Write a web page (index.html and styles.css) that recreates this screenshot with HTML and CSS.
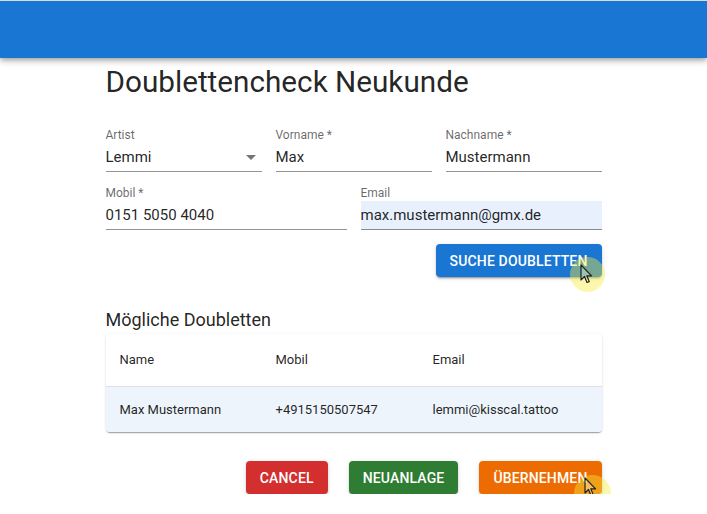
FILE: index.html
```html
<!DOCTYPE html>
<html lang="de">
<head>
  <meta charset="UTF-8" />
  <meta name="viewport" content="width=device-width, initial-scale=1.0"/>
  <title>Doublettencheck Neukunde</title>
  <link rel="stylesheet" href="styles.css">
</head>
<body>

  <header class="appbar"></header>

  <main class="container">
    <h1 class="title">Doublettencheck Neukunde</h1>

    <!-- Stammdaten -->
    <div class="form-row three">
      <div class="field">
        <label>Artist</label>
        <div class="input select">
          <span>Lemmi</span>
          <svg class="drop" viewBox="0 0 24 24" width="24" height="24"><path d="M7 10l5 5 5-5z"/></svg>
        </div>
      </div>
      <div class="field">
        <label>Vorname *</label>
        <div class="input">Max</div>
      </div>
      <div class="field">
        <label>Nachname *</label>
        <div class="input">Mustermann</div>
      </div>
    </div>

    <div class="form-row two">
      <div class="field">
        <label>Mobil *</label>
        <div class="input">0151 5050 4040</div>
      </div>
      <div class="field">
        <label>Email</label>
        <div class="input autofill">max.mustermann@gmx.de</div>
      </div>
    </div>

    <div class="actions search">
      <button class="btn blue">Suche Doubletten
        <span class="click" style="left: 145px; top: 21px;"></span>
      </button>
    </div>

    <!-- Treffer -->
    <h2 class="subtitle">Mögliche Doubletten</h2>
    <div class="paper">
      <table>
        <thead>
          <tr><th class="c1">Name</th><th class="c2">Mobil</th><th>Email</th></tr>
        </thead>
        <tbody>
          <tr class="selected"><td>Max Mustermann</td><td>+4915150507547</td><td>lemmi@kisscal.tattoo</td></tr>
        </tbody>
      </table>
    </div>

    <div class="actions bottom">
      <button class="btn red">Cancel</button>
      <button class="btn green">Neuanlage</button>
      <button class="btn orange">Übernehmen
        <span class="click low" style="left: 106px; top: 17px;"></span>
      </button>
    </div>
  </main>

</body>
</html>
```

FILE: styles.css
```css
* {
  box-sizing: border-box;
  margin: 0;
  padding: 0;
  font-family: Roboto, 'Liberation Sans', sans-serif;
}

body {
  background: #fff;
  border-top: 1px solid #d8dde3;
  color: rgba(0,0,0,0.87);
}

.appbar {
  height: 57px;
  background: #1976d2;
  box-shadow: 0 2px 4px -1px rgba(0,0,0,0.2), 0 4px 5px 0 rgba(0,0,0,0.14), 0 1px 10px 0 rgba(0,0,0,0.12);
}

.container {
  width: 496px;
  margin: 0 auto;
}

.title {
  margin-top: 6px;
  font-size: 29.7px;
  font-weight: 400;
  line-height: 36px;
}

/* Form */
.form-row {
  display: grid;
  gap: 14px;
}

.form-row.three {
  grid-template-columns: repeat(3, 1fr);
  margin-top: 28px;
}

.form-row.two {
  grid-template-columns: repeat(2, 1fr);
  margin-top: 14px;
}

.field label {
  display: block;
  font-size: 12px;
  line-height: 14px;
  color: rgba(0,0,0,0.6);
  margin-bottom: 1px;
}

.input {
  height: 29px;
  line-height: 28px;
  font-size: 15px;
  border-bottom: 1px solid rgba(0,0,0,0.42);
}

.input.select {
  display: flex;
  justify-content: space-between;
  align-items: center;
}

.drop {
  fill: rgba(0,0,0,0.54);
  margin-right: -1px;
}

.input.autofill {
  background: #e8f0fe;
}

/* Buttons */
.actions {
  display: flex;
  justify-content: flex-end;
}

.actions.search {
  margin-top: 14px;
}

.actions.bottom {
  margin-top: 29px;
  gap: 21px;
}

.btn {
  position: relative;
  height: 33px;
  padding: 0 14px;
  border: none;
  border-radius: 4px;
  color: #fff;
  font-size: 14px;
  font-weight: 500;
  letter-spacing: 0.15px;
  text-transform: uppercase;
  box-shadow: 0 3px 1px -2px rgba(0,0,0,0.2), 0 2px 2px 0 rgba(0,0,0,0.14), 0 1px 5px 0 rgba(0,0,0,0.12);
}

.btn.blue   { background: #1976d2; }
.btn.red    { background: #d32f2f; }
.btn.green  { background: #2e7d32; }
.btn.orange { background: #ed6c02; }

/* click highlight with pointer */
.click {
  position: absolute;
  width: 13px;
  height: 21px;
  z-index: 2;
}

.click::before {
  content: "";
  position: absolute;
  left: -11px;
  top: -8px;
  width: 35px;
  height: 35px;
  border-radius: 50%;
  background: rgba(245,235,60,0.42);
}

.click.low::before {
  left: -11px;
  top: -3px;
  width: 37px;
  height: 37px;
}

.click::after {
  content: "";
  position: absolute;
  left: -1px;
  top: -1px;
  width: 13px;
  height: 21px;
  background: url("data:image/svg+xml,%3Csvg xmlns='http://www.w3.org/2000/svg' width='13' height='21' viewBox='0 0 13 21'%3E%3Cpath d='M1 1 L1 16 L4.5 12.5 L7 18.5 L9.2 17.6 L6.8 11.8 L11.6 11.8 Z' fill='rgba(255,255,255,0.3)' stroke='%23222' stroke-width='1.2' stroke-linejoin='round'/%3E%3C/svg%3E") no-repeat;
}

/* Table */
.subtitle {
  margin-top: 31px;
  font-size: 18px;
  font-weight: 400;
  line-height: 24px;
}

.paper {
  margin-top: 2px;
  border-radius: 4px;
  overflow: hidden;
  box-shadow: 0 2px 1px -1px rgba(0,0,0,0.2), 0 1px 1px 0 rgba(0,0,0,0.14), 0 1px 3px 0 rgba(0,0,0,0.12);
}

table {
  width: 100%;
  border-collapse: collapse;
  font-size: 13px;
}

th, td {
  text-align: left;
  font-weight: 400;
  padding: 0 14px;
}

th {
  height: 52px;
  border-bottom: 1px solid #e0e0e0;
}

td {
  height: 46px;
}

th.c1 { width: 156px; }
th.c2 { width: 157px; }

tr.selected {
  background: #edf4fb;
}
```
